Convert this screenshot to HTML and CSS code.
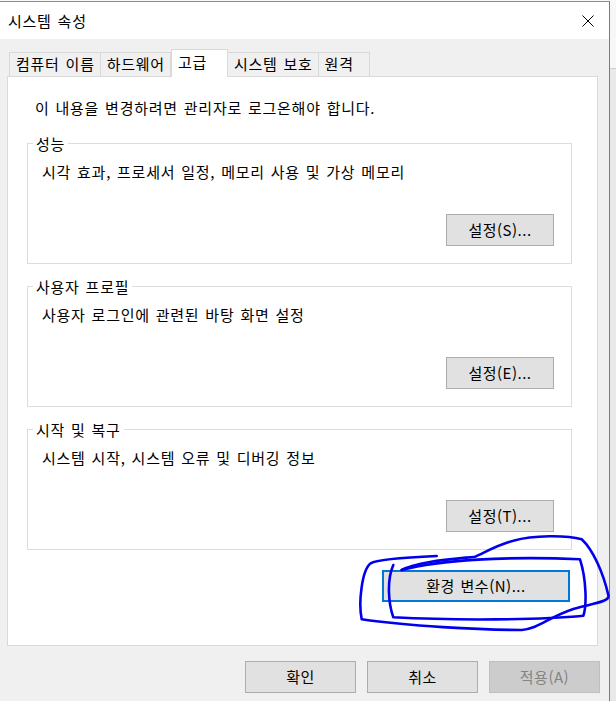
FILE: index.html
```html
<!DOCTYPE html>
<html lang="ko">
<head>
<meta charset="utf-8">
<title>시스템 속성</title>
<link rel="stylesheet" href="styles.css">
</head>
<body>
<div class="window">
  <div class="titlebar">
    <span class="title">시스템 속성</span>
    <svg class="close" width="12" height="12" viewBox="0 0 12 12"><path d="M0.5 0.5 L11.5 11.5 M11.5 0.5 L0.5 11.5" stroke="#000" stroke-width="1" fill="none"/></svg>
  </div>
  <div class="content">
    <div class="tabs">
      <div class="tab">컴퓨터 이름</div>
      <div class="tab">하드웨어</div>
      <div class="tab active">고급</div>
      <div class="tab">시스템 보호</div>
      <div class="tab">원격</div>
    </div>
    <div class="panel">
      <p class="notice">이 내용을 변경하려면 관리자로 로그온해야 합니다.</p>
      <fieldset class="group first">
        <legend>성능</legend>
        <p class="desc">시각 효과, 프로세서 일정, 메모리 사용 및 가상 메모리</p>
        <div class="actions"><button class="btn">설정(S)...</button></div>
      </fieldset>
      <fieldset class="group">
        <legend>사용자 프로필</legend>
        <p class="desc">사용자 로그인에 관련된 바탕 화면 설정</p>
        <div class="actions"><button class="btn">설정(E)...</button></div>
      </fieldset>
      <fieldset class="group">
        <legend>시작 및 복구</legend>
        <p class="desc">시스템 시작, 시스템 오류 및 디버깅 정보</p>
        <div class="actions"><button class="btn">설정(T)...</button></div>
      </fieldset>
      <div class="env-row"><button class="btn env">환경 변수(N)...</button></div>
    </div>
    <div class="footer">
      <button class="btn wide">확인</button>
      <button class="btn wide">취소</button>
      <button class="btn wide disabled">적용(A)</button>
    </div>
  </div>
</div>
<svg class="scribble" width="616" height="701" viewBox="0 0 616 701">
  <path d="M436.7 556 C406.7 557.3 376.7 559.3 370.7 563.3 C361.7 570 358.3 603.3 361.7 619.3 C406.7 626 480 630 521.7 630 C540 628 546.7 618 573.3 609 C593.3 603.3 610.7 601.7 608.3 595 C603.3 573.3 593.3 550 581.7 539.3 C566.7 535 533.3 535 513.3 540.7 C496.7 545 483.3 553.3 475 556.7 C450 559.3 416.7 561.7 401.7 570" />
  <path d="M401.7 570 C440 560 506.7 556 580 559.3 C586.7 580 586.7 606.7 583.3 615.7 C540 620 456.7 620.7 393.3 617.3 C388.3 603.3 386.7 580 393.3 565" />
</svg>
</body>
</html>
```
FILE: styles.css
```css
* { box-sizing: border-box; }
html, body { margin: 0; padding: 0; }
body {
  position: relative;
  height: 701px;
  overflow: hidden;
  background: linear-gradient(#f7f7f7 0 68px, #cfcfcf 68px 69px, #e9e9e9 69px);
  font-family: "Noto Sans CJK KR", "Noto Sans", sans-serif;
  font-size: 15px;
  color: #000;
  letter-spacing: 0.75px;
  word-spacing: 1px;
}
.window {
  width: 610px;
  height: 700px;
  margin-top: 1px;
  background: #f0f0f0;
  border-top: 1px solid #8c8c8c;
  border-right: 1px solid #7a7a7a;
}
.titlebar {
  height: 37px;
  background: #fff;
  display: flex;
  align-items: center;
  justify-content: space-between;
  padding: 0 15px 0 8px;
}
.title { line-height: 20px; }
.close { display: block; }
.content { padding-top: 10px; }
.tabs {
  display: flex;
  align-items: flex-end;
  height: 27px;
  margin: 0 11px 0 9px;
}
.tab {
  height: 24px;
  line-height: 22px;
  padding: 0 5px 0 6px;
  min-width: 52px;
  border: 1px solid #d9d9d9;
  border-bottom: 0;
  margin-left: -1px;
  background: #f0f0f0;
  white-space: nowrap;
}
.tab:first-child { margin-left: 0; }
.tab.active {
  position: relative;
  z-index: 1;
  height: 28px;
  min-width: 57px;
  margin: 0 0 -1px 0;
  padding: 0 6px 3px 6px;
  line-height: 24px;
  background: #fff;
}
.panel {
  margin: 0 11px 0 7px;
  background: #fff;
  border: 1px solid #d9d9d9;
  padding: 21px 0 43px 0;
}
.notice {
  margin: 0 0 0 27px;
  line-height: 19px;
}
.group {
  margin: 13px 25px 0 19px;
  padding: 0 17px 17px 5px;
  border: 1px solid #dcdcdc;
  min-width: 0;
}
.group.first { margin-top: 17px; }
.group legend {
  padding: 0 3px;
  line-height: 19px;
}
.desc {
  margin: 9px 0 0 9px;
  line-height: 19px;
}
.actions {
  display: flex;
  justify-content: flex-end;
  margin-top: 33px;
}
.btn {
  width: 108px;
  height: 32px;
  padding: 0;
  margin: 0;
  background: #e1e1e1;
  border: 1px solid #adadad;
  font: inherit;
  color: #000;
  letter-spacing: 0.5px;
  word-spacing: 1px;
  line-height: 20px;
}
.env-row {
  display: flex;
  justify-content: flex-end;
  margin: 20px 27px 0 0;
}
.btn.env {
  width: 188px;
  border: 2px solid #0078d7;
}
.footer {
  display: flex;
  justify-content: flex-end;
  gap: 11px;
  padding: 15px 9px 0 0;
}
.btn.wide { width: 111px; }
.btn.disabled {
  background: #cccccc;
  border-color: #bfbfbf;
  color: #838383;
}
.scribble {
  position: absolute;
  left: 0;
  top: 0;
  pointer-events: none;
}
.scribble path {
  fill: none;
  stroke: #0000ee;
  stroke-width: 2.6;
  stroke-linecap: round;
  stroke-linejoin: round;
}
```
